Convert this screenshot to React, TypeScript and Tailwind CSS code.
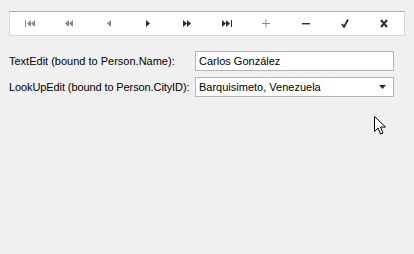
const dark = "#2b2b45";
const gray = "#8a8a8a";

const Tri = ({ dir, c }: { dir: "l" | "r"; c: string }) => (
  <path d={dir === "r" ? "M0 0 L4 3.5 L0 7 Z" : "M4 0 L0 3.5 L4 7 Z"} fill={c} />
);

const NavIcon = ({ kind }: { kind: string }) => {
  const c = ["first", "prev", "prevPage", "add"].includes(kind) ? gray : dark;
  return (
    <svg width="12" height="9" viewBox="0 0 12 9" className="block">
      {kind === "first" && (
        <g transform="translate(1,1)">
          <rect x="0" y="0" width="1" height="7" fill={c} />
          <g transform="translate(2,0)"><Tri dir="l" c={c} /></g>
          <g transform="translate(6,0)"><Tri dir="l" c={c} /></g>
        </g>
      )}
      {kind === "prevPage" && (
        <g transform="translate(2,1)">
          <Tri dir="l" c={c} />
          <g transform="translate(4,0)"><Tri dir="l" c={c} /></g>
        </g>
      )}
      {kind === "prev" && <g transform="translate(4,1)"><Tri dir="l" c={c} /></g>}
      {kind === "next" && <g transform="translate(4,1)"><Tri dir="r" c={c} /></g>}
      {kind === "nextPage" && (
        <g transform="translate(2,1)">
          <Tri dir="r" c={c} />
          <g transform="translate(4,0)"><Tri dir="r" c={c} /></g>
        </g>
      )}
      {kind === "last" && (
        <g transform="translate(1,1)">
          <Tri dir="r" c={c} />
          <g transform="translate(4,0)"><Tri dir="r" c={c} /></g>
          <rect x="9" y="0" width="1" height="7" fill={c} />
        </g>
      )}
      {kind === "add" && (
        <g fill={c}>
          <rect x="5.5" y="0.5" width="1" height="8" />
          <rect x="2" y="4" width="8" height="1" />
        </g>
      )}
      {kind === "remove" && <rect x="2" y="4" width="8" height="1.4" fill={c} />}
      {kind === "ok" && (
        <path d="M3 5 L5 8 L9 0.5" stroke={c} strokeWidth="1.8" fill="none" />
      )}
      {kind === "cancel" && (
        <path d="M3 1 L9 8 M9 1 L3 8" stroke={c} strokeWidth="2" fill="none" />
      )}
    </svg>
  );
};

const App = () => {
  const buttons = ["first", "prevPage", "prev", "next", "nextPage", "last", "add", "remove", "ok", "cancel"];
  return (
    <div
      className="relative w-[414px] h-[254px] bg-[#f0f0f0] overflow-hidden text-[11px] text-black"
      style={{ fontFamily: '"Liberation Sans", Arial, sans-serif' }}
    >
      <div className="pt-[11px] px-[9px]">
        <div className="flex h-[25px] bg-white border border-[#d5d5d5] border-t-[#a8a8b0]">
          {buttons.map((b) => (
            <div key={b} className="flex-1 flex items-center justify-center">
              <NavIcon kind={b} />
            </div>
          ))}
        </div>

        <div className="mt-[15px] flex flex-col gap-[6px]">
          <div className="flex items-center">
            <label className="w-[186px] shrink-0 whitespace-nowrap leading-none">TextEdit (bound to Person.Name):</label>
            <div className="w-[199px] h-[20px] bg-white border border-[#b4b4b9] flex items-center px-[3px] leading-none whitespace-nowrap">
              Carlos González
            </div>
          </div>
          <div className="flex items-center">
            <label className="w-[186px] shrink-0 whitespace-nowrap leading-none tracking-[-0.1px]">LookUpEdit (bound to Person.CityID):</label>
            <div className="w-[199px] h-[20px] bg-white border border-[#b4b4b9] flex items-center justify-between pl-[3px] pr-[6px] leading-none whitespace-nowrap">
              <span>Barquisimeto, Venezuela</span>
              <svg width="8" height="5" viewBox="0 0 8 5">
                <path d="M0 0 H7 L3.5 4 Z" fill={dark} />
              </svg>
            </div>
          </div>
        </div>
      </div>

      <svg className="absolute left-[374px] top-[116px]" width="13" height="20" viewBox="0 0 13 20">
        <path
          d="M0.5 0.5 V15.5 L4 12 L6.5 18 L9 17 L6.5 11 H11.5 Z"
          fill="white"
          stroke="black"
          strokeWidth="1"
          strokeLinejoin="miter"
        />
      </svg>
    </div>
  );
};

export default App;
